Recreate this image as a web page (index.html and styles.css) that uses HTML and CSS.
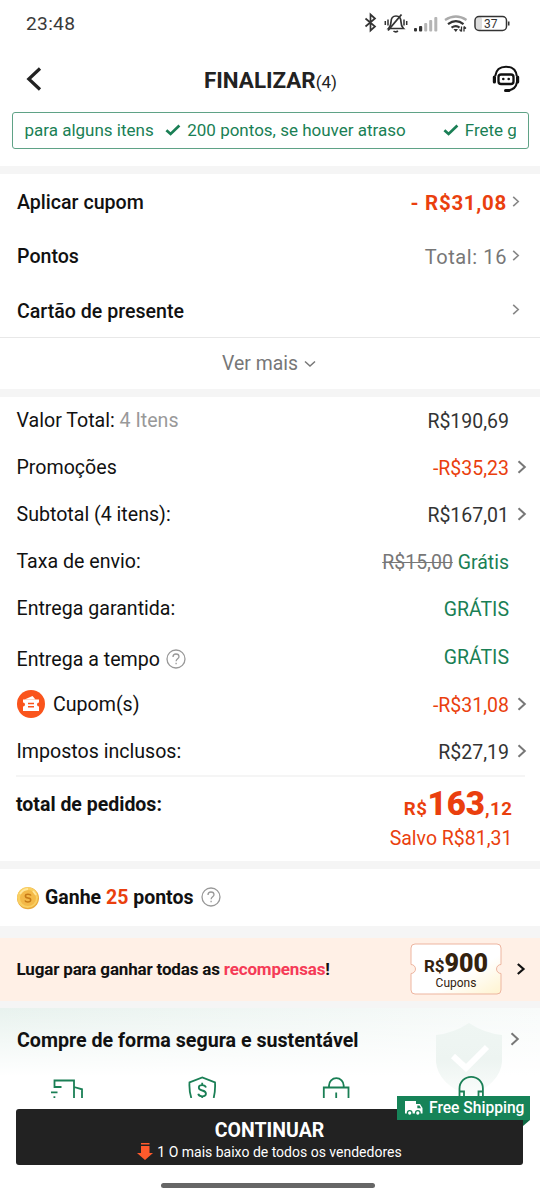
FILE: index.html
```html
<!DOCTYPE html>
<html lang="pt-BR">
<head>
<meta charset="utf-8">
<meta name="viewport" content="width=device-width">
<title>Finalizar</title>
<link rel="stylesheet" href="styles.css">
</head>
<body>
<svg class="defs" width="0" height="0">
  <symbol id="chev" viewBox="0 0 10 16"><path d="M1.500 2.200 7.800 8l-6.300 5.800" fill="none" stroke="currentColor" stroke-width="2"/></symbol>
  <symbol id="check" viewBox="0 0 16 12"><path d="M1.400 6.200 5.600 10 14.400 1.600" fill="none" stroke="currentColor" stroke-width="2.700"/></symbol>
  <symbol id="help" viewBox="0 0 20 20"><circle cx="10" cy="10" r="9" fill="none" stroke="currentColor" stroke-width="1.300"/><path d="M7 8c0-1.900 1.300-3 3-3s3 1.100 3 2.700c0 2-2.900 2.200-2.900 4.500M10.100 13.700v1.500" fill="none" stroke="currentColor" stroke-width="1.300"/></symbol>
</svg>
<div class="screen">
  <div class="status">
    <span class="clock">23:48</span>
    <svg class="status-icons" width="150" height="24" viewBox="0 0 150 24" fill="none" stroke="#333">
      <path d="M5.500 7.500l9.500 8-4.500 4V3.500l4.500 4-9.500 8" stroke-width="1.700"/>
      <path d="M28.500 17.500c2-2 2.500-3.500 2.500-6.500 0-4 2-6 5-6s5 2 5 6c0 3 .5 4.500 2.500 6.500z" stroke-width="1.700"/>
      <path d="M28 19.500 41.500 3.500" stroke-width="1.800"/>
      <path d="M33.500 20q2 1.800 4.500 0" stroke-width="1.600"/>
      <path d="M25.300 10v4M28 8.500v6M44 8.500v6M46.700 10v4" stroke-width="1.500"/>
      <g stroke="none" fill="#333"><rect x="54" y="17" width="3" height="3.500" rx="1"/><rect x="59" y="15" width="3.200" height="5.500" rx="1"/></g>
      <g stroke="none" fill="#b5b5b5"><rect x="64.200" y="12" width="3" height="8.500" rx="1"/><rect x="69.200" y="9" width="3" height="11.500" rx="1"/><rect x="74.300" y="6" width="3" height="14.500" rx="1"/></g>
      <path d="M85 9q11-7 21.500 0" stroke="#aaa" stroke-width="2.300"/>
      <path d="M88 13.200q8-6 15.500 0M91.500 16.700q4.500-3 8 0" stroke-width="2.200"/>
      <path d="M93.500 18h4.500l-2.200 3z" fill="#333" stroke="none"/>
      <path d="M101.500 15.500v5M99.500 18.500l2 2M104 20.500v-5M106 17.500l-2-2" stroke-width="1.300"/>
      <rect x="116" y="5.500" width="6" height="13.500" rx="3" fill="#ddd" stroke="none"/>
      <rect x="115" y="5.500" width="31.500" height="14" rx="4" stroke-width="1.500"/>
      <path d="M148.700 10.500v4" stroke-width="1.600"/>
      <text x="124" y="17" class="battery">37</text>
    </svg>
  </div>
  <header class="header">
    <svg width="16" height="24" viewBox="0 0 16 24" fill="none" stroke="#222" stroke-width="3.200"><path d="M14 1.500 2.800 12 14 22.500"/></svg>
    <h1>FINALIZAR<small>(4)</small></h1>
    <svg class="bot" width="30" height="30" viewBox="0 0 30 30" fill="none" stroke="#111">
      <path d="M4.200 12C5 6 9 2.700 15 2.700S25 6 25.800 12M26 18c-.7 5-4 8-9.500 8.500" stroke-width="2"/>
      <path d="M3.400 13v5M26.600 13v5" stroke-width="3.200" stroke-linecap="round"/>
      <rect x="7.500" y="10.500" width="15" height="9.500" rx="2.600" stroke-width="2.300"/>
      <path d="M14.500 26.500h3.500" stroke-width="3" stroke-linecap="round"/>
      <circle cx="12.300" cy="15" r="1.300" fill="#111" stroke="none"/><circle cx="17.700" cy="15" r="1.300" fill="#111" stroke="none"/>
    </svg>
  </header>
  <div class="ticker"><div class="ticker-track">
    <span>para alguns itens</span>
    <svg class="tick-a" width="16" height="12"><use href="#check"/></svg><span>200 pontos, se houver atraso</span>
    <svg class="tick-b" width="16" height="12"><use href="#check"/></svg><span>Frete g</span>
  </div></div>

  <section class="options">
    <div class="option"><b>Aplicar cupom</b><span class="discount">- R$31,08</span><svg class="chev-s"><use href="#chev"/></svg></div>
    <div class="option"><b>Pontos</b><span class="points">Total: 16</span><svg class="chev-s"><use href="#chev"/></svg></div>
    <div class="option"><b>Cartão de presente</b><svg class="chev-s"><use href="#chev"/></svg></div>
    <div class="more"><span>Ver mais</span><svg width="12" height="8" viewBox="0 0 12 8" fill="none" stroke="#777" stroke-width="1.500"><path d="M1 1.500l5 4.500 5-4.500"/></svg></div>
  </section>

  <section class="summary">
    <div class="row first"><span class="label">Valor Total: <i>4 Itens</i></span><span class="value">R$190,69</span></div>
    <div class="row"><span class="label">Promoções</span><span class="value red">-R$35,23</span><svg class="chev-m"><use href="#chev"/></svg></div>
    <div class="row"><span class="label">Subtotal (4 itens):</span><span class="value">R$167,01</span><svg class="chev-m"><use href="#chev"/></svg></div>
    <div class="row"><span class="label">Taxa de envio:</span><span class="value green"><s>R$15,00</s> Grátis</span></div>
    <div class="row"><span class="label">Entrega garantida:</span><span class="value green">GRÁTIS</span></div>
    <div class="row tempo"><span class="label">Entrega a tempo</span><svg class="help"><use href="#help"/></svg><span class="value green">GRÁTIS</span></div>
    <div class="row"><svg class="coupon" width="28" height="28" viewBox="0 0 28 28"><circle cx="14" cy="14" r="14" fill="#fa541c"/><path d="M6 9.500h16v3a2 2 0 0 0 0 4V21H6v-4.500a2 2 0 0 0 0-4z" fill="#fff"/><path d="M7.500 9.500 15.500 6l3 3.500z" fill="#fff"/><path d="M11 13.500h6M11 16.800h6" stroke="#fa541c" stroke-width="1.400"/></svg><span class="label coupon-label">Cupom(s)</span><span class="value red">-R$31,08</span><svg class="chev-m"><use href="#chev"/></svg></div>
    <div class="row"><span class="label">Impostos inclusos:</span><span class="value">R$27,19</span><svg class="chev-m"><use href="#chev"/></svg></div>
    <div class="total">
      <b class="total-label">total de pedidos:</b>
      <div class="total-values"><div class="amount">R$<strong>163</strong><span>,12</span></div><div class="saved">Salvo R$81,31</div></div>
    </div>
  </section>

  <section class="earn">
    <svg width="24" height="24" viewBox="0 0 24 24"><circle cx="12" cy="12.300" r="11" fill="#e9a93a"/><circle cx="11.500" cy="11.500" r="10.500" fill="#f9cf62"/><circle cx="12" cy="12" r="8" fill="#f3b948"/><path d="M4 8a10 10 0 0 1 8-5M17 5l3 4" stroke="#ffe69a" stroke-width="1.800" fill="none"/><path d="M15 9.500c-.5-1-1.500-1.300-3-1.300-3.500 0-3.500 3.400 0 3.700 3.800.3 3.500 4-.2 4-1.500 0-2.500-.5-2.900-1.400" fill="none" stroke="#c77a17" stroke-width="1.500"/></svg>
    <b>Ganhe <em>25</em> pontos</b><svg class="help"><use href="#help"/></svg>
  </section>

  <section class="rewards">
    <b>Lugar para ganhar todas as <em>recompensas</em>!</b>
    <div class="ticket">
      <svg class="ticket-bg" width="92" height="52" viewBox="0 0 92 52"><defs><linearGradient id="tg" x1="0" y1="0" x2="1" y2="1"><stop offset=".6" stop-color="#fff"/><stop offset="1" stop-color="#fff3cf"/></linearGradient></defs><path d="M5 1h82a4 4 0 0 1 4 4v16.500a4.500 4.500 0 0 0 0 9V47a4 4 0 0 1-4 4H5a4 4 0 0 1-4-4V30.500a4.500 4.500 0 0 0 0-9V5a4 4 0 0 1 4-4z" fill="url(#tg)" stroke="#edb5a0"/></svg>
      <div class="ticket-price">R$<strong>900</strong></div><div class="ticket-text">Cupons</div>
    </div>
    <svg class="chev-l" width="10" height="14" viewBox="0 0 10 14" fill="none" stroke="#111" stroke-width="2.200"><path d="M1.800 2 7.500 7l-5.700 5"/></svg>
  </section>

  <section class="secure">
    <div class="secure-head"><b>Compre de forma segura e sustentável</b><svg class="chev-m"><use href="#chev"/></svg></div>
    <svg class="shield" width="68" height="76" viewBox="0 0 68 76"><defs><linearGradient id="sg" x1="0" y1="0" x2="0" y2="1"><stop stop-color="#eff6f3"/><stop offset=".5" stop-color="#edf4f1"/><stop offset="1" stop-color="#fbfdfc"/></linearGradient></defs><path d="M34 1q15 10 33 12v27q-2 22-33 34Q3 62 1 40V13Q19 11 34 1z" fill="url(#sg)"/><path d="M18 34 31 46 52 25" fill="none" stroke="#fff" stroke-width="6"/></svg>
    <div class="perks">
      <svg viewBox="0 0 36 23"><path d="M12.500 12H5.500V5.500H25V23M25 12l8 2.300V23M2 17.300h6.500M4.500 22.200h1.800"/></svg>
      <svg viewBox="0 0 36 23"><path d="M7.300 23Q5 16 5.500 7.500L18.300 2.500 31 7.500Q31.500 16 29.700 23M22 12.500q-.8-2.300-3.800-2.300c-4.500 0-4.500 4.500 0 5.300 5 1 5 5.800 0 5.800q-3.400 0-4-2.500M18.200 7.800v2.400M18.200 21.300V23"/></svg>
      <svg viewBox="0 0 36 23"><path d="M5.800 23V12.500h24.700V23M11 12.500V10.500a7.300 7.300 0 0 1 14.700 0v2M18.200 17.500V23"/></svg>
      <svg viewBox="0 0 36 23"><path d="M6.500 23V13.500a11.700 11.700 0 0 1 23.400 0V23M6 16.500h5V23M30.500 16.500h-5V23"/></svg>
    </div>
  </section>

  <footer class="footer">
    <div class="cta">
      <div class="cta-title">CONTINUAR</div>
      <div class="cta-sub"><svg width="16" height="17" viewBox="0 0 16 17" fill="#ff5a2c"><path d="M4 0h8.500v1.500H4zM4 3h8.500v7H16l-8 7-8-7h4z"/></svg><span>1 O mais baixo de todos os vendedores</span></div>
      <div class="ship"><svg width="18" height="16" viewBox="0 0 18 16"><path d="M0 1h11v3h4l2.500 4v5.500H0z" fill="#fff"/><path d="M12.300 5.500h2.200L16 8.200h-3.700z" fill="#168358"/><circle cx="4.700" cy="13" r="2.300" fill="#fff" stroke="#168358" stroke-width="1.300"/><circle cx="12.800" cy="13" r="2.300" fill="#fff" stroke="#168358" stroke-width="1.300"/></svg><span>Free Shipping</span></div>
    </div>
    <div class="home"></div>
  </footer>
</div>
</body>
</html>
```
FILE: styles.css
```css
* { box-sizing: border-box; }
body { margin: 0; background: #fff; font-family: Roboto, "Liberation Sans", sans-serif; color: #111; }
svg { display: block; flex: none; }
b { font-weight: 500; }
i, em { font-style: normal; }
.defs { position: absolute; }
.screen { width: 540px; height: 1199px; overflow: hidden; display: flex; flex-direction: column; white-space: nowrap; }
.screen > * { flex: none; }

.status { height: 46px; padding: 0 30px 0 26px; display: flex; align-items: center; justify-content: space-between; }
.clock { font-size: 19.2px; letter-spacing: .3px; color: #3a3a3a; }
.status-icons { margin-bottom: 1px; }
.battery { font-size: 12px; fill: #333; stroke: none; }

.header { height: 66px; padding: 0 19px 0 26px; display: flex; align-items: center; justify-content: space-between; }
.header h1 { margin: 3px 0 0 8px; font-size: 22.4px; line-height: 28px; font-weight: 700; color: #222; }
.header small { font-size: 17px; font-weight: 400; }

.ticker { height: 37px; margin: 0 11.500px; padding: 0 12px; border: 1px solid #5fa286; border-radius: 3px; color: #1a7f55; font-size: 17px; }
.ticker-track { height: 34px; display: flex; align-items: center; overflow: hidden; }
.ticker-track > * { flex: none; }
.tick-a { margin: 0 6px 0 11.500px; }
.tick-b { margin: 0 6px 0 37px; }

.options { margin-top: 17px; border-top: 8px solid #f5f5f5; border-bottom: 8px solid #f5f5f5; height: 231px; }
.option { height: 54.3px; padding: 3px 20.500px 0 17px; display: flex; align-items: center; font-size: 19.6px; }
.option b { margin-right: auto; color: #111; }
.chev-s { width: 8px; height: 13px; margin: 0 0 3px 4.500px; color: #888; }
.discount { font-size: 20.5px; font-weight: 700; letter-spacing: .7px; color: #ea3f0e; }
.points { font-size: 20px; letter-spacing: .6px; color: #777; }
.more { height: 52px; padding: 1px 2px 0 0; border-top: 1px solid #e8e8e8; display: flex; align-items: center; justify-content: center; gap: 6px; color: #777; font-size: 19.4px; }

.summary { height: 464px; }
.row { height: 47px; padding: 1.500px 13.500px 0 16.500px; display: flex; align-items: center; font-size: 19.6px; }
.row.first { height: 46px; padding-top: 0; }
.row.tempo { height: 49px; padding-top: 0; }
.label i { color: #999; }
.value { margin: 3px 17.500px 0 auto; font-size: 19.5px; color: #333; }
.tempo .value { margin-top: 4px; }
.value:has(+ .chev-m) { margin-right: 7.500px; }
.chev-m { width: 10px; height: 16px; color: #777; }
.red { color: #ea3f0e; }
.green { color: #1a7f55; }
.green s { color: #777; }
.help { width: 20px; height: 20px; margin-left: 6px; color: #999; }
.tempo .label, .tempo .help { margin-top: 7px; }
.coupon-label { margin-left: 8.500px; }
.total { height: 86px; margin: 1px 15px 0 16px; border-top: 2px solid #f5f5f5; display: flex; justify-content: space-between; }
.total-label { font-size: 19.5px; line-height: 24px; padding-top: 16px; font-weight: 700; }
.total-values { padding: 10px 12.500px 0 0; text-align: right; color: #ea3f0e; }
.amount { font-size: 18.7px; line-height: 34px; font-weight: 700; letter-spacing: .5px; }
.amount strong { font-size: 33px; letter-spacing: 0; }
.saved { font-size: 19.5px; line-height: 30px; margin-top: -2.500px; }

.earn { box-sizing: content-box; height: 57px; border-top: 8px solid #f5f5f5; border-bottom: 12px solid #f5f5f5; padding-left: 16px; display: flex; align-items: center; }
.earn b { margin: -1px 0 0 5px; font-size: 19.5px; font-weight: 700; }
.earn em { color: #ea3f0e; }
.earn .help { margin: -1px 0 0 8px; }

.rewards { height: 63px; background: #fff0e6; padding: 0 14px 0 16.500px; display: flex; align-items: center; }
.rewards b { font-size: 17px; font-weight: 700; letter-spacing: -.17px; margin-bottom: 2px; }
.rewards em { color: #f53b57; }
.ticket { position: relative; width: 92px; height: 52px; margin: 0 14px 2px auto; text-align: center; color: #33220f; }
.ticket-bg { position: absolute; inset: 0; }
.ticket-price { position: relative; font-size: 17px; font-weight: 700; line-height: 28px; padding-top: 7px; }
.ticket-price strong { font-size: 25px; }
.ticket-text { position: relative; font-size: 12px; line-height: 12px; margin-top: -2.500px; }
.chev-l { margin-bottom: 1px; }

.secure { position: relative; height: 93px; border-top: 7px solid #f5f5f5; background: linear-gradient(to bottom, rgba(255,255,255,0), #fff 68px), linear-gradient(to right, #e8f2ee, #f8fbfa); }
.secure-head { height: 63px; padding: 1px 20px 0 17px; display: flex; align-items: center; justify-content: space-between; position: relative; z-index: 1; }
.secure-head b { font-size: 19.65px; font-weight: 700; margin-top: 1px; }
.secure-head svg { margin-bottom: 3px; }
.shield { position: absolute; left: 435px; top: 14px; }
.perks { height: 27px; padding-top: 4px; display: grid; grid-template-columns: repeat(4, 134.5px); position: relative; z-index: 1; }
.perks svg { width: 36px; height: 23px; justify-self: center; fill: none; stroke: #1a7f55; stroke-width: 1.8; }

.footer { flex: 1; padding: 15px 17px 0 16px; }
.cta { position: relative; z-index: 2; height: 56px; border-radius: 3px; background: #222; color: #fff; text-align: center; padding-top: 9px; }
.cta-title { font-size: 19.5px; line-height: 25px; font-weight: 700; }
.cta-sub { display: flex; align-items: center; justify-content: center; gap: 4px; font-size: 14px; line-height: 16px; }
.ship { position: absolute; right: -7px; top: -13px; width: 133px; height: 24px; background: #168358; display: flex; align-items: center; gap: 6px; padding-left: 8px; font-size: 15.6px; font-weight: 500; }
.ship::after { content: ""; position: absolute; right: 0; top: 24px; width: 7px; height: 6px; background: #0d6843; clip-path: polygon(0 0, 100% 0, 0 100%); }
.home { width: 214px; height: 5px; border-radius: 3px; background: #666; margin: 18px 0 0 145px; }
```
